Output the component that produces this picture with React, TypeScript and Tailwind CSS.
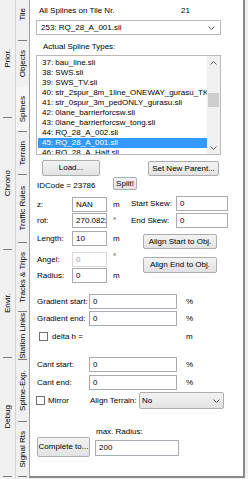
import React from "react";

const splineTypes = [
  "37: bau_line.sli",
  "38: SWS.sli",
  "39: SWS_TV.sli",
  "40: str_2spur_8m_1line_ONEWAY_gurasu_TK.sli",
  "41: str_0spur_3m_pedONLY_gurasu.sli",
  "42: 0lane_barrierforcsw.sli",
  "43: 0lane_barrierforcsw_tong.sli",
  "44: RQ_28_A_002.sli",
  "45: RQ_28_A_001.sli",
  "46: RQ_28_A_Half.sli",
];

function Chevron({ up = false }: { up?: boolean }) {
  return (
    <svg width="7" height="4" viewBox="0 0 7 4" className={up ? "rotate-180" : ""}>
      <polyline points="0.5,0.5 3.5,3.5 6.5,0.5" fill="none" stroke="#5a5a5a" strokeWidth="1" />
    </svg>
  );
}

function SideTab({
  label,
  className = "",
  textClass = "",
  markClass = "",
  mark = true,
}: {
  label: string;
  className?: string;
  textClass?: string;
  markClass?: string;
  mark?: boolean;
}) {
  return (
    <div className={`flex flex-col ${className}`}>
      <div className={`flex flex-1 items-center justify-center ${textClass}`}>
        <span className="rotate-180 whitespace-nowrap leading-[10px] [writing-mode:vertical-rl]">{label}</span>
      </div>
      {mark && <div className={`h-px bg-[#7d7d7d] ${markClass}`} />}
    </div>
  );
}

function Input({ value, className = "", disabled = false }: { value: string; className?: string; disabled?: boolean }) {
  return (
    <div
      className={`flex items-center overflow-hidden whitespace-nowrap border bg-white pl-[3px] ${
        disabled ? "border-[#d9d9d9] text-[#9a9a9a]" : "border-[#a9abb2]"
      } ${className}`}
    >
      {value}
    </div>
  );
}

function Btn({ children, className = "" }: { children: React.ReactNode; className?: string }) {
  return (
    <div
      className={`flex items-center justify-center whitespace-nowrap rounded-[2px] border border-[#adadad] bg-linear-to-b from-[#f3f3f3] to-[#e2e2e2] ${className}`}
    >
      {children}
    </div>
  );
}

function Field({
  label,
  value,
  unit,
  className = "",
  unitClass = "",
  disabled,
}: {
  label: string;
  value: string;
  unit: string;
  className?: string;
  unitClass?: string;
  disabled?: boolean;
}) {
  return (
    <div className={`flex h-[15px] items-center ${className}`}>
      <span className="w-[35px]">{label}</span>
      <Input value={value} disabled={disabled} className="h-[15px] w-[35px]" />
      <span className={`ml-[6px] ${unitClass}`}>{unit}</span>
    </div>
  );
}

function Check() {
  return <div className="h-[9px] w-[9px] border border-[#707070] bg-white" />;
}

export default function App() {
  return (
    <div className="flex h-[479px] w-[248px] overflow-hidden bg-[#f0f0f0] font-['Liberation_Sans',Arial,sans-serif] text-[8px] leading-[10px] text-black">
      {/* Outer tab strip */}
      <div className="flex w-[15px] flex-col">
        <SideTab label="Prior." className="h-[118px]" markClass="mx-[3px]" />
        <SideTab label="Chrono" className="h-[132px]" markClass="mx-[3px]" />
        <SideTab label="Envir." className="h-[108px]" markClass="mx-[3px]" />
        <SideTab label="Debug" className="h-[119px]" markClass="mx-[3px]" />
      </div>

      {/* Inner tab strip */}
      <div className="flex w-[14px] flex-col border-l border-[#d4d4d4]">
        <SideTab label="Tile" className="h-[41px]" textClass="pb-[11px]" markClass="mx-[2px]" />
        <SideTab label="Objects" className="h-[46px]" mark={false} />
        <SideTab label="Splines" className="h-[45px] bg-[#f6f6f6]" markClass="mx-[2px]" />
        <SideTab label="Terrain" className="h-[43px]" markClass="mx-[2px]" />
        <SideTab label="Traffic Rules" className="h-[68px]" markClass="mx-[2px]" />
        <SideTab label="Tracks & Trips" className="h-[69px]" markClass="mx-[2px]" />
        <SideTab label="Station Links" className="h-[48px]" markClass="mx-[2px]" />
        <SideTab label="Spline-Exp." className="h-[62px]" markClass="mx-[2px]" />
        <SideTab label="Signal Rts" className="h-[55px]" markClass="mx-[2px]" />
      </div>

      {/* Splines panel */}
      <div className="flex h-[478px] w-[216px] flex-col border-b-2 border-l border-r-2 border-b-[#8a8a8a] border-l-[#a0a0a0] border-r-[#8a8a8a] bg-white">
        <div className="mt-[4px] flex h-[13px] items-center pl-[9px]">
          <span className="w-[142px]">All Splines on Tile Nr.</span>
          <span>21</span>
        </div>

        <div className="ml-[6px] mt-[3px] flex h-[15px] w-[185px] items-center justify-between border border-[#b9b9b9] pl-[4px] pr-[5px]">
          <span>253: RQ_28_A_001.sli</span>
          <Chevron />
        </div>

        <div className="ml-[13px] mt-[6px] flex h-[12px] items-center">Actual Spline Types:</div>

        {/* Spline type list */}
        <div className="ml-[6px] mt-[2px] flex h-[100px] w-[185px] border border-[#b9b9b9]">
          <div className="flex-1 overflow-hidden pl-[1px] pt-[2px]">
            {splineTypes.map((t, i) => (
              <div
                key={t}
                className={`h-[10px] whitespace-nowrap pl-[4px] leading-[10px] ${i === 8 ? "bg-[#3399ff] text-white" : ""}`}
              >
                {t}
              </div>
            ))}
          </div>
          <div className="flex w-[13px] flex-col bg-[#f0f0f0]">
            <div className="flex h-[13px] items-center justify-center">
              <Chevron up />
            </div>
            <div className="h-[24px]" />
            <div className="mx-[1px] h-[14px] bg-[#cdcdcd]" />
            <div className="flex-1" />
            <div className="flex h-[13px] items-center justify-center">
              <Chevron />
            </div>
          </div>
        </div>

        <div className="mt-[5px] flex h-[16px]">
          <Btn className="ml-[12px] h-[16px] w-[58px]">Load...</Btn>
          <Btn className="ml-[48px] mt-[1px] h-[15px] w-[71px]">Set New Parent...</Btn>
        </div>

        <div className="mt-[1px] flex h-[13px]">
          <span className="ml-[7px] w-[76px] self-end leading-[9px]">IDCode = 23786</span>
          <Btn className="h-[13px] w-[24px]">Split!</Btn>
        </div>

        {/* Position / skew block */}
        <div className="mt-[6px] flex">
          <div className="ml-[7px] flex w-[94px] flex-col pt-[1px]">
            <Field label="z:" value="NAN" unit="m" />
            <Field label="rot:" value="270.0822" unit="°" className="mt-[1px]" />
            <Field label="Length:" value="10" unit="m" className="mt-[3px]" />
            <Field label="Angel:" value="0" unit="°" disabled className="mt-[6px]" unitClass="self-start" />
            <Field label="Radius:" value="0" unit="m" className="mt-[1px]" />
          </div>
          <div className="flex flex-col">
            <div className="flex h-[15px] items-center">
              <span className="w-[45px]">Start Skew:</span>
              <Input value="0" className="h-[15px] w-[52px]" />
            </div>
            <div className="mt-[2px] flex h-[15px] items-center">
              <span className="w-[45px]">End Skew:</span>
              <Input value="0" className="h-[15px] w-[52px]" />
            </div>
            <Btn className="ml-[12px] mt-[6px] h-[15px] w-[74px]">Align Start to Obj.</Btn>
            <Btn className="ml-[12px] mt-[8px] h-[16px] w-[74px]">Align End to Obj.</Btn>
          </div>
        </div>

        {/* Gradient */}
        <div className="ml-[7px] mt-[11px] flex h-[15px] items-center">
          <span className="w-[52px]">Gradient start:</span>
          <Input value="0" className="h-[15px] w-[88px]" />
          <span className="ml-[9px]">%</span>
        </div>
        <div className="ml-[7px] mt-[2px] flex h-[15px] items-center">
          <span className="w-[52px]">Gradient end:</span>
          <Input value="0" className="h-[15px] w-[88px]" />
          <span className="ml-[9px]">%</span>
        </div>

        <div className="ml-[9px] mt-[6px] flex h-[9px] items-center">
          <Check />
          <span className="ml-[4px] w-[134px]">delta h =</span>
          <span>m</span>
        </div>

        {/* Cant */}
        <div className="ml-[7px] mt-[16px] flex h-[15px] items-center">
          <span className="w-[52px]">Cant start:</span>
          <Input value="0" className="h-[15px] w-[88px]" />
          <span className="ml-[9px]">%</span>
        </div>
        <div className="ml-[7px] mt-[3px] flex h-[15px] items-center">
          <span className="w-[52px]">Cant end:</span>
          <Input value="0" className="h-[15px] w-[88px]" />
          <span className="ml-[9px]">%</span>
        </div>

        <div className="ml-[6px] mt-[2px] flex h-[17px] items-center">
          <Check />
          <span className="ml-[3px] w-[42px]">Mirror</span>
          <span className="w-[49px]">Align Terrain:</span>
          <div className="flex h-[17px] w-[85px] items-center justify-between rounded-[2px] border border-[#adadad] bg-linear-to-b from-[#f3f3f3] to-[#e2e2e2] pl-[2px] pr-[3px]">
            <span>No</span>
            <Chevron />
          </div>
        </div>

        <div className="mt-[18px] flex">
          <Btn className="ml-[7px] mt-[10px] h-[20px] w-[53px]">Complete to...</Btn>
          <div className="ml-[5px] flex flex-col">
            <span className="h-[10px] pl-[1px]">max. Radius:</span>
            <Input value="200" className="mt-[3px] h-[16px] w-[84px]" />
          </div>
        </div>
      </div>
    </div>
  );
}
